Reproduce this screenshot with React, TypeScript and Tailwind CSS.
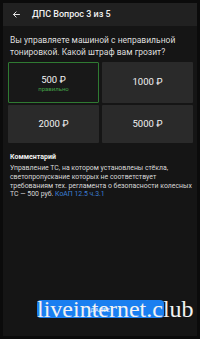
import React from "react";

export default function App() {
  return (
    <div className="w-[200px] h-[339px] bg-[#0b0b0b] px-[3px] py-[3px] flex flex-col relative" style={{ fontFamily: "Roboto, 'Noto Sans', sans-serif" }}>
      <div className="flex-1 bg-[#151515] flex flex-col">
        <div className="h-[23px] bg-[#212121] flex items-center pl-[9px]">
          <svg width="9" height="9" viewBox="0 0 24 24" fill="none" stroke="#e6e6e6" strokeWidth="2.6" strokeLinecap="round" strokeLinejoin="round">
            <path d="M20 12H4" />
            <path d="M11 5l-7 7 7 7" />
          </svg>
          <span className="ml-[11px] text-[9px] font-medium text-[#f0f0f0] leading-none">ДПС Вопрос 3 из 5</span>
        </div>
        <div className="px-[7px] pt-[8px] text-[8.5px] leading-[12px] text-[#dedede]">
          Вы управляете машиной с неправильной тонировкой. Какой штраф вам грозит?
        </div>
        <div className="mt-[4px] pl-[5px] pr-[4px] grid grid-cols-2 gap-x-[3px] gap-y-[2px]">
          <div className="h-[41px] bg-[#181818] border border-[#2f7a32] rounded-[1px] flex flex-col items-center justify-center">
            <span className="text-[9.5px] text-[#f2f2f2] leading-[11px]">500 ₽</span>
            <span className="text-[6px] text-[#43a047] leading-[7px]">правильно</span>
          </div>
          <div className="h-[41px] bg-[#2a2a2a] rounded-[1px] flex items-center justify-center">
            <span className="text-[9.5px] text-[#f2f2f2]">1000 ₽</span>
          </div>
          <div className="h-[38px] bg-[#2a2a2a] rounded-[1px] flex items-center justify-center">
            <span className="text-[9.5px] text-[#f2f2f2]">2000 ₽</span>
          </div>
          <div className="h-[38px] bg-[#2a2a2a] rounded-[1px] flex items-center justify-center">
            <span className="text-[9.5px] text-[#f2f2f2]">5000 ₽</span>
          </div>
        </div>
        <div className="pl-[7px] pr-[2px] mt-[9px]">
          <div className="text-[7px] font-bold leading-[10px] text-[#f0f0f0]">Комментарий</div>
          <div className="mt-[2px] text-[6.9px] leading-[8.75px] text-[#d8d8d8]">
            Управление ТС, на котором установлены стёкла, светопропускание которых не соответствует требованиям тех. регламента о безопасности колесных ТС — 500 руб. <span className="text-[#3b7fd6]">КоАП 12.5 ч.3.1</span>
          </div>
        </div>
        <div className="flex-1" />
        <div className="flex justify-center mb-[18px]">
          <div className="w-[127px] h-[18px] bg-[#1a7ff0] rounded-[4px] flex items-center justify-center">
            <span className="text-[6px] text-[#cfe3ff] font-medium">ДАЛЕЕ</span>
          </div>
        </div>
      </div>
      <div className="absolute left-[37px] top-[297px] text-[24px] leading-none text-[#f2f2f2] whitespace-nowrap" style={{ fontFamily: "'Liberation Serif', serif" }}>
        liveinternet.club
      </div>
    </div>
  );
}
